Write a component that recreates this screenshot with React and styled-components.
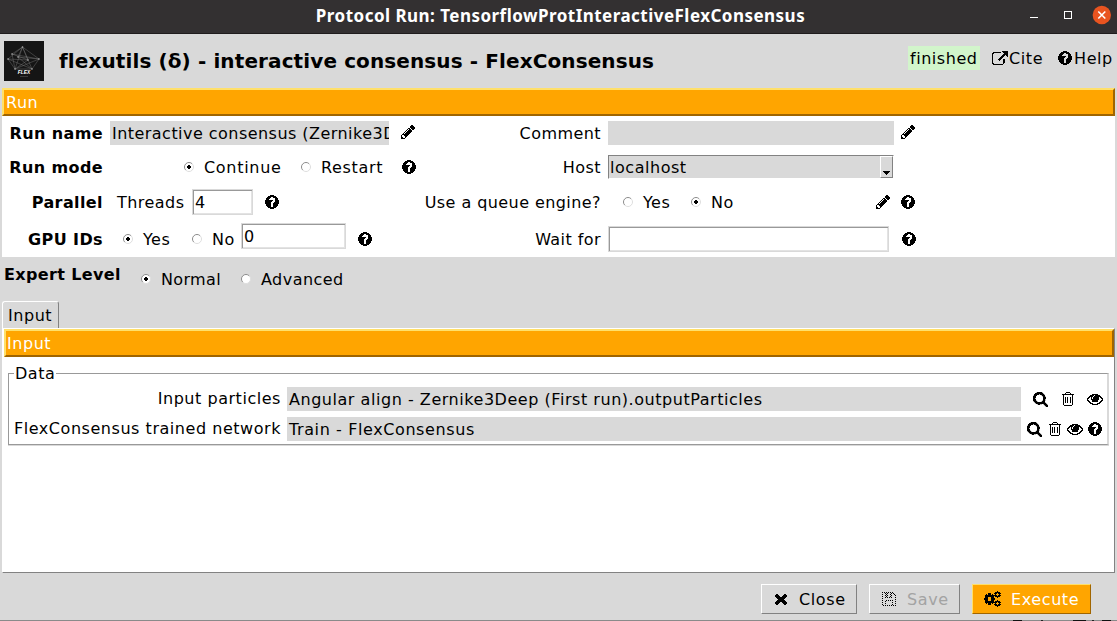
import React from 'react';
import styled, { createGlobalStyle } from 'styled-components';

const Global = createGlobalStyle`
  *, *::before, *::after { box-sizing: border-box; }
  html, body { margin: 0; padding: 0; overflow: hidden; background: #d9d9d9; }
`;

const Window = styled.div`
  width: 1117px;
  height: 621px;
  display: flex;
  flex-direction: column;
  overflow: hidden;
  background: #d9d9d9;
  color: #000;
  font: 16px/20px "DejaVu Sans", sans-serif;
  letter-spacing: 0.54px;
  white-space: pre;
  cursor: default;
`;

const TitleBar = styled.header`
  height: 34px;
  flex: none;
  display: grid;
  grid-template-columns: 100px 1fr 96px;
  align-items: center;
  background: #333031;
  border-bottom: 1px solid #1f1c1d;
`;

const WindowTitle = styled.div`
  grid-column: 2;
  text-align: center;
  color: #fff;
  font: bold 17px/20px "Noto Sans", sans-serif;
  letter-spacing: 0.47px;
  padding: 0 0 2px 0;
`;

const Header = styled.div`
  height: 54px;
  flex: none;
  display: flex;
  align-items: center;
  padding: 0 4px;
`;

const Heading = styled.h1`
  margin: 0 0 0 15px;
  flex: 1;
  font-size: 20px;
  line-height: 24px;
  font-weight: bold;
  letter-spacing: 0.11px;
`;

const Status = styled.span`
  width: 72px;
  height: 24px;
  padding-left: 2px;
  line-height: 25px;
  margin: -6px 12px 0 0;
  background: #d2f5cb;
`;

const HeaderLink = styled.span`
  display: flex;
  align-items: center;
  gap: ${(p) => p.$gap || 0}px;
  width: ${(p) => p.$w}px;
  margin-top: -6px;
`;

const IconText = styled.span`
  padding-top: 2px;
  letter-spacing: 0.6px;
`;

const SectionBar = styled.div`
  height: 28px;
  flex: none;
  margin: ${(p) => p.$margin || '0'};
  padding-left: ${(p) => p.$pad}px;
  line-height: 25px;
  color: #fff;
  background: #ffa500;
  border: 2px solid;
  border-color: #ffe06a #a06500 #a06500 #ffe06a;
`;

const RunForm = styled.section`
  height: 141px;
  flex: none;
  margin: 0 2px;
  display: grid;
  grid-template-columns: 418px 1fr;
  grid-template-rows: 34px 34px 36px 37px;
  background: #fff;
`;

const Cell = styled.div`
  display: flex;
  align-items: center;
  min-width: 0;
`;

const Label = styled.span`
  width: ${(p) => p.$w}px;
  flex: none;
  padding-top: 2px;
  text-align: right;
  font-weight: ${(p) => (p.$bold ? 'bold' : 'normal')};
  letter-spacing: ${(p) => (p.$bold ? 0.4 : 0.43)}px;
`;

const ParamLabel = styled(Label)`
  padding-top: 0;
  letter-spacing: 0.54px;
`;

const Caption = styled.span`
  width: ${(p) => p.$w}px;
  flex: none;
  padding-top: 2px;
  margin-left: ${(p) => p.$ml || 0}px;
  letter-spacing: ${(p) => p.$spacing || 0.45}px;
`;

const Field = styled.div`
  width: ${(p) => p.$w}px;
  height: 24px;
  flex: none;
  overflow: hidden;
  margin-left: ${(p) => p.$ml || 0}px;
  padding-left: 2px;
  line-height: 25px;
  letter-spacing: ${(p) => p.$spacing || 0.54}px;
  background: #d9d9d9;
`;

const Entry = styled.div`
  width: ${(p) => p.$w}px;
  height: 26px;
  flex: none;
  margin: ${(p) => p.$margin};
  padding-left: 2px;
  line-height: 25px;
  background: #fff;
  border: 1px solid #d9d9d9;
  box-shadow: inset 1px 1px #999, inset -1px -1px #e3e3e3;
`;

const Combo = styled.div`
  width: 286px;
  height: 24px;
  flex: none;
  margin-left: 7px;
  padding: 0 0 0 1px;
  display: flex;
  justify-content: space-between;
  line-height: 23px;
  background: #d9d9d9;
  border: 1px solid;
  border-color: #828282 #fff #fff #828282;
`;

const ComboArrow = styled.div`
  width: 13px;
  height: 22px;
  display: flex;
  justify-content: center;
  align-items: flex-end;
  padding-bottom: 2px;
  border: 1px solid;
  border-color: #fff #828282 #828282 #fff;
`;

const Slot = styled.span`
  display: flex;
  flex: none;
  margin: ${(p) => p.$margin || '0'};
`;

const ExpertLevel = styled.div`
  height: 44px;
  flex: none;
  display: flex;
  align-items: center;
  padding-left: 4px;
`;

const ExpertTitle = styled.span`
  width: 137px;
  padding-bottom: 8px;
  font-weight: bold;
  letter-spacing: 0.36px;
`;

const TabStrip = styled.div`
  height: 27px;
  flex: none;
  display: flex;
  padding-left: 2px;
`;

const Tab = styled.div`
  width: 57px;
  padding-left: 5px;
  line-height: 28px;
  border: 1px solid;
  border-color: #fff #828282 transparent #fff;
  border-bottom: 0;
  border-radius: 3px 3px 0 0;
`;

const Pane = styled.section`
  height: 245px;
  flex: none;
  margin: 0 2px;
  background: #fff;
  border: 1px solid;
  border-color: #fff #828282 #828282 #fff;
`;

const Group = styled.fieldset`
  width: 1101px;
  height: 82px;
  margin: 6px 0 0 5px;
  padding: 1px 0 0;
  min-width: 0;
  border: solid;
  border-color: #999 #d9d9d9 #999 #999;
  border-width: 1px 2px 1px 1px;
  box-shadow: 0 1px #d9d9d9;
`;

const Legend = styled.legend`
  margin-left: 5px;
  padding: 0 0 0 1px;
  width: 42px;
  height: 20px;
  line-height: 22px;
`;

const ParamRow = styled.div`
  height: 30px;
  display: flex;
  align-items: center;
`;

const Footer = styled.footer`
  height: 47px;
  flex: none;
  display: flex;
  justify-content: flex-end;
  gap: 12px;
  padding: 11px 26px 0 0;
`;

const Button = styled.div`
  width: ${(p) => p.$w}px;
  height: 30px;
  display: flex;
  align-items: center;
  padding-left: ${(p) => p.$pad}px;
  gap: ${(p) => p.$gap}px;
  color: ${(p) => (p.$primary ? '#fff' : p.$disabled ? '#a3a3a3' : '#000')};
  background: ${(p) => (p.$primary ? '#ffa500' : '#d9d9d9')};
  border: 1px solid;
  border-color: ${(p) =>
    p.$primary ? '#ffe06a #a06500 #a06500 #ffe06a' : '#fff #828282 #828282 #fff'};
`;

const BottomEdge = styled.div`
  height: 1px;
  flex: none;
  background: linear-gradient(90deg, #8a8a8a 1013px, #111 1013px 1022px, #8a8a8a 1022px 1041px,
    #222 1041px 1043px, #8a8a8a 1043px 1073px, #111 1073px 1086px, #8a8a8a 1086px 1092px,
    #222 1092px 1094px, #8a8a8a 1094px 1102px, #111 1102px 1111px, #8a8a8a 1111px);
`;

const PATHS = {
  help: 'M1024 1376v-192q0-14-9-23t-23-9h-192q-14 0-23 9t-9 23v192q0 14 9 23t23 9h192q14 0 23-9t9-23zm256-672q0-88-55.5-163t-138.5-116-170-41q-243 0-371 213-15 24 8 42l132 100q7 6 19 6 16 0 25-12 53-68 86-92 34-24 86-24 48 0 85.5 26t37.5 59q0 38-20 61t-68 45q-63 28-115.5 86.5t-52.5 125.5v36q0 14 9 23t23 9h192q14 0 23-9t9-23q0-19 21.5-49.5t54.5-49.5q32-18 49-28.5t46-35 44.5-48 28-60.5 12.5-81zm384 192q0 209-103 385.5t-279.5 279.5-385.5 103-385.5-103-279.5-279.5-103-385.5 103-385.5 279.5-279.5 385.5-103 385.5 103 279.5 279.5 103 385.5z',
  pencil: 'M491 1536l91-91-235-235-91 91v107h128v128h107zm523-928q0-22-22-22-10 0-17 7l-542 542q-7 7-7 17 0 22 22 22 10 0 17-7l542-542q7-7 7-17zm-54-192l416 416-832 832h-416v-416zm683 96q0 53-37 90l-166 166-416-416 166-165q36-38 90-38 53 0 91 38l235 234q37 39 37 91z',
  trash: 'M4 0H8V1H9V2H12V3H11V13H10V14H2V13H1V3H0V2H3V1H4ZM4 1V2H8V1ZM2 3V13H10V3ZM3 5H4V11H3ZM5 5H6V11H5ZM8 5H9V11H8Z',
  search: 'M1216 832q0-185-131.5-316.5t-316.5-131.5-316.5 131.5-131.5 316.5 131.5 316.5 316.5 131.5 316.5-131.5 131.5-316.5zm512 832q0 52-38 90t-90 38q-54 0-90-38l-343-342q-179 124-399 124-143 0-273.5-55.5t-225-150-150-225-55.5-273.5 55.5-273.5 150-225 225-150 273.5-55.5 273.5 55.5 225 150 150 225 55.5 273.5q0 220-124 399l343 343q37 37 37 90z',
  eye: 'M1664 960q-152-236-381-353 61 104 61 225 0 185-131.5 316.5t-316.5 131.5-316.5-131.5-131.5-316.5q0-121 61-225-229 117-381 353 133 205 333.5 326.5t434.5 121.5 434.5-121.5 333.5-326.5zm-720-384q0-20-14-34t-34-14q-125 0-214.5 89.5t-89.5 214.5q0 20 14 34t34 14 34-14 14-34q0-86 61-147t147-61q20 0 34-14t14-34zm848 384q0 34-20 69-140 230-376.5 368.5t-499.5 138.5-499.5-139-376.5-368q-20-35-20-69t20-69q140-229 376.5-368t499.5-139 499.5 139 376.5 368q20 35 20 69z',
  external: 'M1408 928v320q0 119-84.5 203.5t-203.5 84.5h-832q-119 0-203.5-84.5t-84.5-203.5v-832q0-119 84.5-203.5t203.5-84.5h704q14 0 23 9t9 23v64q0 14-9 23t-23 9h-704q-66 0-113 47t-47 113v832q0 66 47 113t113 47h832q66 0 113-47t47-113v-320q0-14 9-23t23-9h64q14 0 23 9t9 23zm384-864v512q0 26-19 45t-45 19-45-19l-176-176-652 652q-10 10-23 10t-23-10l-114-114q-10-10-10-23t10-23l652-652-176-176q-19-19-19-45t19-45 45-19h512q26 0 45 19t19 45z',
  times: 'M1490 1322q0 40-28 68l-136 136q-28 28-68 28t-68-28l-294-294-294 294q-28 28-68 28t-68-28l-136-136q-28-28-28-68t28-68l294-294-294-294q-28-28-28-68t28-68l136-136q28-28 68-28t68 28l294 294 294-294q28-28 68-28t68 28l136 136q28 28 28 68t-28 68l-294 294 294 294q28 28 28 68z',
};

/* viewBox, pixel width and height, and extra stroke weight of each glyph */
const BOXES = {
  help: ['128 128 1536 1536', 14, 14, 0],
  pencil: ['128 149 1515 1515', 14, 14, 0],
  trash: ['0 0 12 14', 12, 14, 0],
  search: ['54 118 1684 1684', 15, 15, 30],
  eye: ['0 384 1792 1152', 16, 11, 0],
  external: ['0 0 1792 1536', 16, 14, 0],
  times: ['302 366 1188 1188', 12, 11, 0],
};

function Icon({ name }) {
  const [box, w, h, weight] = BOXES[name];
  return (
    <svg width={w} height={h} viewBox={box} preserveAspectRatio="none" shapeRendering="crispEdges">
      <path
        d={PATHS[name]}
        fillRule={name === 'trash' ? 'evenodd' : 'nonzero'}
        stroke={weight ? '#000' : 'none'}
        strokeWidth={weight}
      />
    </svg>
  );
}

function Gear({ cx, cy, r, ring, teeth, tooth }) {
  return (
    <g>
      <circle cx={cx} cy={cy} r={r} fill="none" stroke="#000" strokeWidth={ring} />
      {Array.from({ length: teeth }, (_, i) => (
        <rect
          key={i}
          x={cx - tooth / 2}
          y={cy - r - ring / 2 - tooth * 0.45}
          width={tooth}
          height={tooth}
          transform={`rotate(${(i * 360) / teeth} ${cx} ${cy})`}
        />
      ))}
    </g>
  );
}

function GearsIcon() {
  return (
    <svg width="17" height="16" viewBox="0 0 17 16" shapeRendering="crispEdges">
      <Gear cx={5.5} cy={8} r={3.4} ring={2.9} teeth={8} tooth={2.2} />
      <Gear cx={13.5} cy={3.5} r={2} ring={1.9} teeth={6} tooth={1.4} />
      <Gear cx={13.5} cy={12.5} r={2} ring={1.9} teeth={6} tooth={1.4} />
    </svg>
  );
}

function SaveIcon() {
  return (
    <svg width="14" height="14" viewBox="0 0 14 14" shapeRendering="crispEdges">
      <defs>
        <pattern id="stipple" width="2" height="2" patternUnits="userSpaceOnUse">
          <rect width="1" height="1" fill="#000" />
          <rect x="1" y="1" width="1" height="1" fill="#000" />
        </pattern>
      </defs>
      <path
        fill="url(#stipple)"
        fillRule="evenodd"
        d="M0 0H10L14 4V14H0ZM1 1V13H3V8H11V13H13V5L10 2V6H3V1ZM4 9V13H10V9ZM6 1V5H8V1Z"
      />
    </svg>
  );
}

function Radio({ on }) {
  return (
    <svg width="10" height="10" viewBox="0 0 10 10">
      <circle cx="5" cy="5" r="4.5" fill="#fff" />
      <path d="M1.8 8.2A4.5 4.5 0 0 1 8.2 1.8" fill="none" stroke="#8c8c8c" />
      <path d="M8.2 1.8A4.5 4.5 0 0 1 1.8 8.2" fill="none" stroke="#dedede" />
      {on && <path d="M4 3H6V4H7V6H6V7H4V6H3V4H4Z" shapeRendering="crispEdges" />}
    </svg>
  );
}

function WindowControls() {
  return (
    <svg width="96" height="33" viewBox="0 0 96 33">
      <path d="M9 17H17V18H9Z" fill="#fff" />
      <rect x="43.5" y="11.5" width="7" height="7" fill="none" stroke="#fff" />
      <circle cx="80.8" cy="15" r="9.2" fill="#e95420" />
      <path d="M77.3 11.5L84.3 18.5M84.3 11.5L77.3 18.5" stroke="#fff" strokeWidth="1.6" />
    </svg>
  );
}

const NODES = [[18.5, 6], [8, 13], [4, 18], [35, 18], [11, 28], [28, 28], [14, 16], [24, 19]];
const EDGES = [[0, 1], [0, 2], [0, 3], [0, 4], [0, 5], [1, 3], [1, 4], [2, 5], [2, 4], [3, 4], [3, 5], [4, 5], [6, 3], [6, 5], [7, 4], [2, 7], [0, 6], [0, 7], [1, 7]];

function Logo() {
  return (
    <svg width="40" height="40" viewBox="0 0 40 40">
      <rect width="40" height="40" fill="#151515" />
      {EDGES.map(([a, b]) => (
        <line
          key={`${a}-${b}`}
          x1={NODES[a][0]}
          y1={NODES[a][1]}
          x2={NODES[b][0]}
          y2={NODES[b][1]}
          stroke="#808080"
          strokeWidth="0.4"
        />
      ))}
      {NODES.map(([x, y]) => (
        <circle key={`${x}-${y}`} cx={x} cy={y} r="0.8" fill="#aaa" />
      ))}
      <text
        x="20"
        y="33"
        textAnchor="middle"
        fill="#fff"
        fontFamily="Liberation Sans, sans-serif"
        fontWeight="bold"
        fontStyle="italic"
        fontSize="4.8"
        letterSpacing="0"
      >
        FLEX
      </text>
      <path d="M16 35.5H24" stroke="#555" strokeWidth="0.6" />
    </svg>
  );
}

export default function App() {
  return (
    <>
      <Global />
      <Window>
        <TitleBar>
          <WindowTitle>Protocol Run: TensorflowProtInteractiveFlexConsensus</WindowTitle>
          <WindowControls />
        </TitleBar>

        <Header>
          <Logo />
          <Heading>flexutils (δ) - interactive consensus - FlexConsensus</Heading>
          <Status>finished</Status>
          <HeaderLink $w={66} $gap={1}><Icon name="external" /><IconText>Cite</IconText></HeaderLink>
          <HeaderLink $w={55} $gap={2}><Icon name="help" /><IconText>Help</IconText></HeaderLink>
        </Header>

        <SectionBar $margin="0 2px" $pad={2}>Run</SectionBar>
        <RunForm>
          <Cell>
            <Label $w={101} $bold>Run name</Label>
            <Field $w={279} $ml={7} $spacing={0.46}>Interactive consensus (Zernike3D</Field>
            <Slot $margin="0 0 2px 12px"><Icon name="pencil" /></Slot>
          </Cell>
          <Cell>
            <Label $w={181}>Comment</Label>
            <Field $w={286} $ml={7} />
            <Slot $margin="0 0 2px 7px"><Icon name="pencil" /></Slot>
          </Cell>

          <Cell>
            <Label $w={101} $bold>Run mode</Label>
            <Slot $margin="0 0 0 81px"><Radio on /></Slot>
            <Caption $ml={10} $w={97} $spacing={0.7}>Continue</Caption>
            <Radio />
            <Caption $ml={10} $w={81} $spacing={0.65}>Restart</Caption>
            <Icon name="help" />
          </Cell>
          <Cell>
            <Label $w={181}>Host</Label>
            <Combo>
              localhost
              <ComboArrow>
                <svg width="7" height="4" viewBox="0 0 7 4" shapeRendering="crispEdges">
                  <path d="M0 0H7V1H6V2H5V3H4V4H3V3H2V2H1V1H0Z" />
                </svg>
              </ComboArrow>
            </Combo>
          </Cell>

          <Cell>
            <Label $w={101} $bold>Parallel</Label>
            <Caption $ml={14} $w={75}>Threads</Caption>
            <Entry $w={61} $margin="0 12px 0 0">4</Entry>
            <Icon name="help" />
          </Cell>
          <Cell>
            <Label $w={181}>Use a queue engine?</Label>
            <Slot $margin="0 0 0 22px"><Radio /></Slot>
            <Caption $ml={10} $w={48}>Yes</Caption>
            <Radio on />
            <Caption $ml={10} $w={165}>No</Caption>
            <Icon name="pencil" />
            <Slot $margin="0 0 0 11px"><Icon name="help" /></Slot>
          </Cell>

          <Cell>
            <Label $w={101} $bold>GPU IDs</Label>
            <Slot $margin="0 0 0 20px"><Radio on /></Slot>
            <Caption $ml={10} $w={49}>Yes</Caption>
            <Radio />
            <Caption $ml={10} $w={29}>No</Caption>
            <Entry $w={105} $margin="0 12px 5px 0">0</Entry>
            <Icon name="help" />
          </Cell>
          <Cell>
            <Label $w={181}>Wait for</Label>
            <Entry $w={281} $margin="0 13px 0 7px" />
            <Icon name="help" />
          </Cell>
        </RunForm>

        <ExpertLevel>
          <ExpertTitle>Expert Level</ExpertTitle>
          <Radio on />
          <Caption $ml={10} $w={80} $spacing={0.35}>Normal</Caption>
          <Radio />
          <Caption $ml={10} $w={100}>Advanced</Caption>
        </ExpertLevel>

        <TabStrip>
          <Tab>Input</Tab>
        </TabStrip>
        <Pane>
          <SectionBar $margin="0 0 0 1px" $pad={1}>Input</SectionBar>
          <Group>
            <Legend>Data</Legend>
            <ParamRow>
              <ParamLabel $w={272}>Input particles</ParamLabel>
              <Field $w={734} $ml={6}>Angular align - Zernike3Deep (First run).outputParticles</Field>
              <Slot $margin="0 0 0 12px"><Icon name="search" /></Slot>
              <Slot $margin="0 0 0 14px"><Icon name="trash" /></Slot>
              <Slot $margin="0 0 0 13px"><Icon name="eye" /></Slot>
            </ParamRow>
            <ParamRow>
              <ParamLabel $w={272}>FlexConsensus trained network</ParamLabel>
              <Field $w={734} $ml={6} $spacing={0.6}>Train - FlexConsensus</Field>
              <Slot $margin="0 0 0 6px"><Icon name="search" /></Slot>
              <Slot $margin="0 0 0 7px"><Icon name="trash" /></Slot>
              <Slot $margin="0 0 0 6px"><Icon name="eye" /></Slot>
              <Slot $margin="0 0 0 5px"><Icon name="help" /></Slot>
            </ParamRow>
          </Group>
        </Pane>

        <Footer>
          <Button $w={96} $pad={13} $gap={12}><Icon name="times" /><IconText>Close</IconText></Button>
          <Button $w={91} $pad={12} $gap={11} $disabled><SaveIcon /><IconText>Save</IconText></Button>
          <Button $w={119} $pad={11} $gap={10} $primary><GearsIcon /><IconText>Execute</IconText></Button>
        </Footer>
        <BottomEdge />
      </Window>
    </>
  );
}
